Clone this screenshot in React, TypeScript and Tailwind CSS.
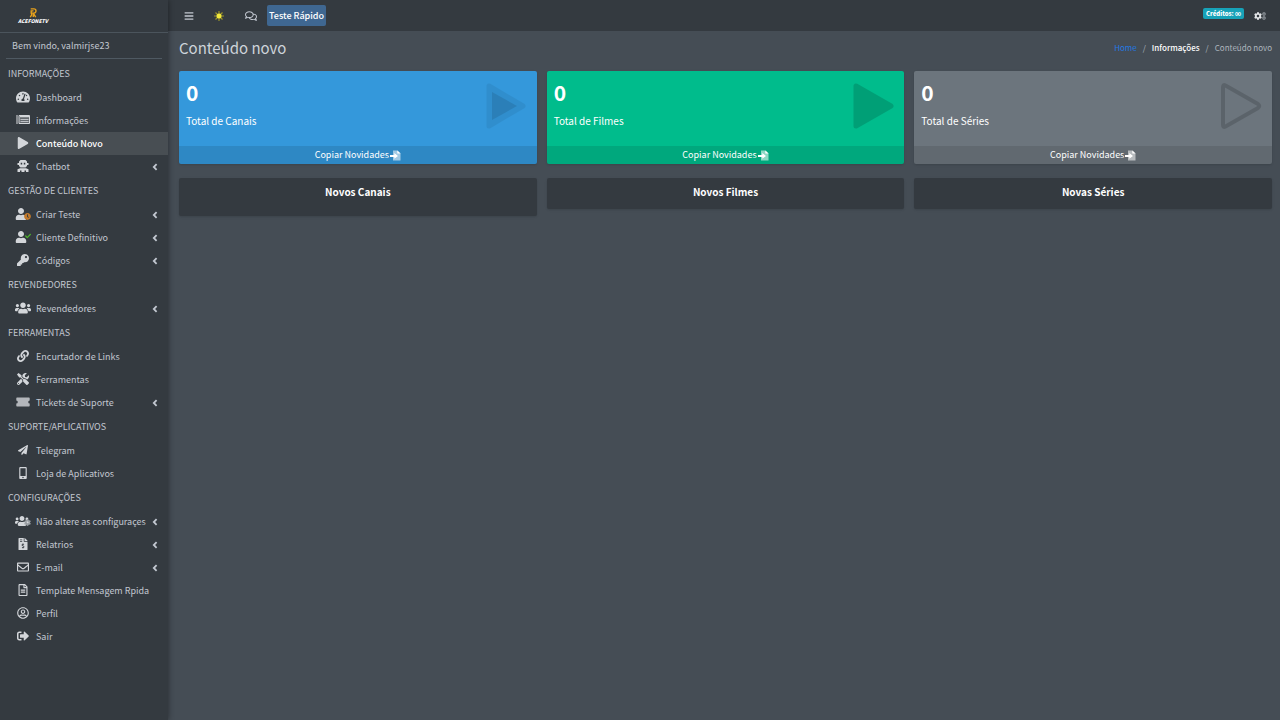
import clsx from "clsx";
import type { ReactNode } from "react";
import type { IconType } from "react-icons";
import {
  FaBars,
  FaCheck,
  FaClock,
  FaCog,
  FaFileInvoiceDollar,
  FaKey,
  FaLink,
  FaMobileAlt,
  FaPaperPlane,
  FaPlay,
  FaRegComments,
  FaRegEnvelope,
  FaRegFileAlt,
  FaRegUserCircle,
  FaSignOutAlt,
  FaTachometerAlt,
  FaTools,
  FaUser,
  FaUsers,
} from "react-icons/fa";

interface NavItem {
  label: string;
  icon: ReactNode;
  active?: boolean;
  expandable?: boolean;
}

interface NavSection {
  title: string;
  items: NavItem[];
}

const icon = (Icon: IconType, className = "size-3") => <Icon className={className} />;

const ChevronIcon = () => (
  <svg viewBox="0 0 6 8" className="ml-auto h-2 w-1.5" fill="none" stroke="currentColor" strokeWidth="1.8">
    <path d="M4.600 1.200L1.800 4l2.800 2.800" />
  </svg>
);

const RobotIcon = () => (
  <svg viewBox="0 0 14 14" className="size-3.5" fill="currentColor">
    <path
      fillRule="evenodd"
      d="M4.500 1h5l1.500 1.500V4h1.500v2H11v1L9.500 8.500h-5L3 7V6H1.500V4H3V2.500zM4.700 3.800v1.700h1.500V3.800zm3.100 0v1.700h1.500V3.800z"
    />
    <path d="M4 9.200h6l2.500 1V13H10v-1.500H8.500V13h-3v-1.500H4V13H1.500v-2.800z" />
  </svg>
);

const ListIcon = () => (
  <svg viewBox="0 0 14 11" className="h-[11px] w-3.5" fill="none" stroke="currentColor">
    <path d="M1 1v9" strokeWidth="1.500" opacity="0.7" />
    <path d="M3 1.500h10.500v8H3z" fill="currentColor" fillOpacity="0.3" />
    <path d="M4 2.500h9" strokeWidth="1.500" />
    <path d="M4.500 5.500h8M4.500 7.500h8" strokeWidth="0.8" />
  </svg>
);

const TicketIcon = () => (
  <svg viewBox="0 0 14 10" className="h-2.5 w-3.5" fill="currentColor">
    <path d="M1 .5h12a.7.7 0 0 1 .7.7v2.300a1.500 1.500 0 0 0 0 3v2.300a.7.7 0 0 1-.7.7H1a.7.7 0 0 1-.7-.7V6.500a1.500 1.500 0 0 0 0-3V1.200A.7.7 0 0 1 1 .5z" opacity="0.8" />
  </svg>
);

const SunIcon = () => (
  <svg viewBox="0 0 12 12" className="size-3" stroke="#9a932a" strokeWidth="1.200">
    <path d="M6 1v10M1 6h10M2.500 2.500l7 7M9.500 2.500l-7 7" />
    <circle cx="6" cy="6" r="2.500" fill="#f3ea3c" stroke="none" />
  </svg>
);

const GearsIcon = () => (
  <span className="flex items-center">
    <FaCog className="size-2 text-[#e3e5e8]" />
    <span className="flex flex-col text-[#8b9197]">
      <FaCog className="size-1" />
      <FaCog className="size-1" />
    </span>
  </span>
);

const FileImportIcon = () => (
  <svg viewBox="0 0 11 11" className="size-[11px]" aria-hidden="true">
    <path d="M3 .5h4.500L10.500 3.300v7.200H3z" fill="currentColor" opacity="0.55" />
    <path d="M7.300.5v3h3.200" fill="currentColor" />
    <path d="M0 4.900h4.300V3L8 5.900 4.300 8.800V6.900H0z" fill="currentColor" />
  </svg>
);

/** User glyph with a small status mark beside it */
const UserWithMark = ({ children }: { children: ReactNode }) => (
  <span className="relative flex w-4 justify-start">
    <FaUser className="size-3" />
    {children}
  </span>
);

const sections: NavSection[] = [
  {
    title: "INFORMAÇÕES",
    items: [
      { label: "Dashboard", icon: icon(FaTachometerAlt, "size-3.5") },
      { label: "informações", icon: <ListIcon /> },
      { label: "Conteúdo Novo", icon: icon(FaPlay), active: true },
      { label: "Chatbot", icon: <RobotIcon />, expandable: true },
    ],
  },
  {
    title: "GESTÃO DE CLIENTES",
    items: [
      {
        label: "Criar Teste",
        icon: (
          <UserWithMark>
            <FaClock className="absolute right-0 bottom-0 size-[7px] text-[#c27a2c]" />
          </UserWithMark>
        ),
        expandable: true,
      },
      {
        label: "Cliente Definitivo",
        icon: (
          <UserWithMark>
            <FaCheck className="absolute top-0.5 right-0 size-1.5 text-[#4fb52c]" />
          </UserWithMark>
        ),
        expandable: true,
      },
      { label: "Códigos", icon: icon(FaKey), expandable: true },
    ],
  },
  {
    title: "REVENDEDORES",
    items: [{ label: "Revendedores", icon: icon(FaUsers, "size-4"), expandable: true }],
  },
  {
    title: "FERRAMENTAS",
    items: [
      { label: "Encurtador de Links", icon: icon(FaLink) },
      { label: "Ferramentas", icon: icon(FaTools) },
      { label: "Tickets de Suporte", icon: <TicketIcon />, expandable: true },
    ],
  },
  {
    title: "SUPORTE/APLICATIVOS",
    items: [
      { label: "Telegram", icon: icon(FaPaperPlane, "size-2.5") },
      { label: "Loja de Aplicativos", icon: icon(FaMobileAlt) },
    ],
  },
  {
    title: "CONFIGURAÇÕES",
    items: [
      {
        label: "Não altere as configuraçes",
        icon: (
          <span className="relative flex w-4">
            <FaUsers className="size-3.5" />
            <FaCog className="absolute right-0 bottom-0.5 size-[7px] text-[#9da2a7]" />
          </span>
        ),
        expandable: true,
      },
      { label: "Relatrios", icon: icon(FaFileInvoiceDollar), expandable: true },
      { label: "E-mail", icon: icon(FaRegEnvelope), expandable: true },
      { label: "Template Mensagem Rpida", icon: icon(FaRegFileAlt) },
      { label: "Perfil", icon: icon(FaRegUserCircle) },
      { label: "Sair", icon: icon(FaSignOutAlt) },
    ],
  },
];

type PlayVariant = "duotone" | "solid" | "outline";

const PlayArt = ({ variant }: { variant: PlayVariant }) => (
  <svg viewBox="0 0 44 48" className="h-12 w-11 text-black" strokeLinejoin="round" aria-hidden="true">
    {variant === "duotone" && (
      <>
        <g opacity="0.06">
          <path d="M4 4v40L38 24z" fill="currentColor" stroke="currentColor" strokeWidth="5" />
        </g>
        <path d="M7 10v28L32 24z" fill="currentColor" opacity="0.1" />
      </>
    )}
    {variant === "solid" && (
      <g opacity="0.15">
        <path d="M4 4v40L39 24z" fill="currentColor" stroke="currentColor" strokeWidth="5" />
      </g>
    )}
    {variant === "outline" && (
      <path
        d="M3 5v38q0 3 2.500 1.500L38 26q2.500-2 0-4L5.500 3.500Q3 2 3 5z"
        fill="none"
        stroke="currentColor"
        strokeWidth="4"
        opacity="0.15"
      />
    )}
  </svg>
);

interface Stat {
  label: string;
  heading: string;
  color: string;
  variant: PlayVariant;
  loading?: boolean;
}

const stats: Stat[] = [
  { label: "Total de Canais", heading: "Novos Canais", color: "bg-[#3498db]", variant: "duotone", loading: true },
  { label: "Total de Filmes", heading: "Novos Filmes", color: "bg-[#00bc8c]", variant: "solid" },
  { label: "Total de Séries", heading: "Novas Séries", color: "bg-[#6c757d]", variant: "outline" },
];

const Logo = () => (
  <a href="#" aria-label="ACEFONETV" className="flex h-8 flex-col items-start justify-center pl-[18px]">
    <span className="flex flex-col items-center">
      <svg viewBox="0 0 10 11" className="h-2.5 w-2.5" fill="none" stroke="#e9a21b" strokeWidth="1.500">
        <path d="M2.500 1H6a2.300 2.300 0 0 1 0 4.600H3V3.200h2.500M3.500 5.600v1.800L2 10M5.500 5.800l2.500 4.200M5.300 7v3" />
      </svg>
      <span className="text-[5px] leading-[6px] font-black text-white italic">ACEFONETV</span>
    </span>
  </a>
);

const Sidebar = () => (
  <aside className="z-10 w-[168px] shrink-0 bg-[#343a40] shadow-[0_0_6px_rgba(0,0,0,0.45)]">
    <div className="border-b border-[#4b545c]">
      <Logo />
    </div>
    <div className="mx-1.5 border-b border-[#4f5962] px-1.5 pt-[5px] pb-1 text-[9px] leading-4 text-[#c2c7d0]">
      Bem vindo, valmirjse23
    </div>
    <nav className="pt-0.5 text-[9px] text-[#c2c7d0]">
      {sections.map((section) => (
        <section key={section.title}>
          <h2 className="flex h-[25px] items-center px-2">{section.title}</h2>
          <ul>
            {section.items.map((item) => (
              <li key={item.label}>
                <a
                  href="#"
                  className={clsx(
                    "flex h-[23px] items-center pr-2.5 pl-[15px]",
                    item.active && "bg-[#484e53] font-medium text-white",
                  )}
                >
                  <span className="mr-[5px] mb-0.5 flex w-4 justify-center text-[#d3d6da]">{item.icon}</span>
                  {item.label}
                  {item.expandable && <ChevronIcon />}
                </a>
              </li>
            ))}
          </ul>
        </section>
      ))}
    </nav>
  </aside>
);

const Topbar = () => (
  <header className="flex h-[31px] items-center bg-[#343a40] pr-3.5 pl-4 text-[#c2c7d0]">
    <button type="button" aria-label="Menu">
      <FaBars className="size-2.5" />
    </button>
    <button type="button" aria-label="Tema" className="ml-[19px]">
      <SunIcon />
    </button>
    <button type="button" aria-label="Mensagens" className="ml-5">
      <FaRegComments className="size-3" />
    </button>
    <button type="button" className="ml-2.5 h-[21px] rounded-xs bg-[#3f6791] px-0.5 text-[9px] font-medium text-white">
      Teste Rápido
    </button>
    <span className="mr-2.5 mb-1 ml-auto rounded-xs bg-[#17a2b8] px-[3px] text-[6px] leading-[11px] font-black text-white">
      Créditos: ∞
    </span>
    <button type="button" aria-label="Configurações">
      <GearsIcon />
    </button>
  </header>
);

const StatColumn = ({ stat }: { stat: Stat }) => (
  <div>
    <div className={clsx("overflow-hidden rounded-xs text-white shadow-sm", stat.color)}>
      <div className="flex h-[75px] justify-between pr-2 pl-[7px]">
        <div>
          <h3 className="pt-[7px] text-[21px] leading-7 font-bold">0</h3>
          <p className="mt-[7px] text-[10px] leading-4">{stat.label}</p>
        </div>
        <div className="pt-[11px]">
          <PlayArt variant={stat.variant} />
        </div>
      </div>
      <button
        type="button"
        className="flex h-[18px] w-full items-center justify-center gap-px bg-black/10 text-[9px] text-white"
      >
        Copiar Novidades <FileImportIcon />
      </button>
    </div>
    <div className={clsx("mt-3.5 rounded-xs bg-[#343a40] shadow-sm", stat.loading && "pb-[7px]")}>
      <h3 className="pt-[5px] pb-[9px] text-center text-[10px] leading-[17px] font-bold text-white">{stat.heading}</h3>
    </div>
  </div>
);

export default function App() {
  return (
    <div className="flex min-h-screen bg-[#454d55] font-['Noto_Sans_CJK_SC','Open_Sans',sans-serif]">
      <Sidebar />
      <div className="min-w-0 flex-1">
        <Topbar />
        <main className="pr-2 pl-[11px]">
          <div className="flex h-10 items-center justify-between pb-1.5">
            <h1 className="text-[15px] text-[#ced4da]">Conteúdo novo</h1>
            <nav className="flex gap-1.5 text-[8px] text-[#adb5bd]">
              <a href="#" className="text-[#2379e2]">
                Home
              </a>
              <span>/</span>
              <a href="#" className="font-medium text-white">
                Informações
              </a>
              <span>/</span>
              <span>Conteúdo novo</span>
            </nav>
          </div>
          <div className="grid grid-cols-3 items-start gap-2.5">
            {stats.map((stat) => (
              <StatColumn key={stat.label} stat={stat} />
            ))}
          </div>
        </main>
      </div>
    </div>
  );
}
